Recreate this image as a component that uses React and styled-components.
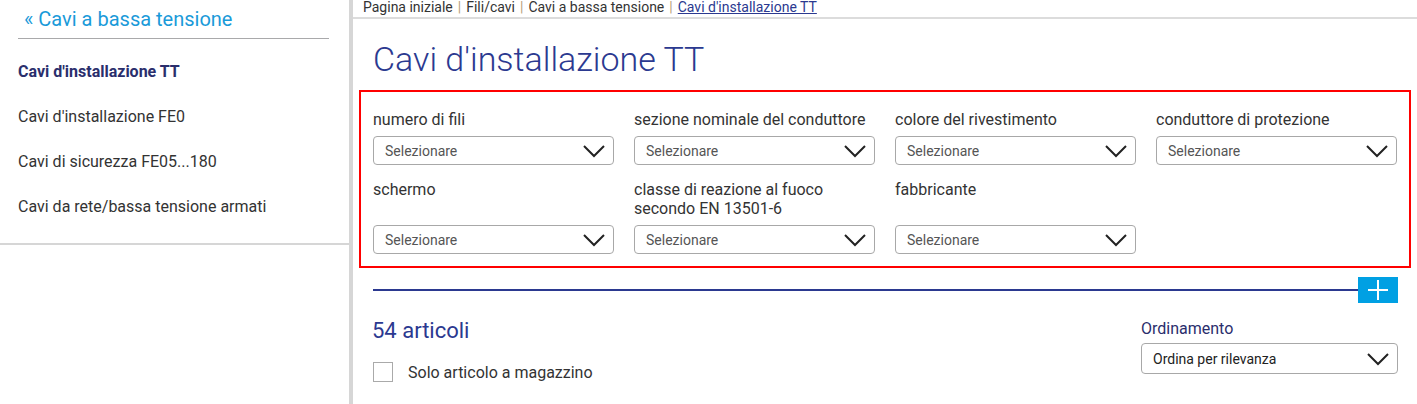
import React from "react";
import styled, { createGlobalStyle } from "styled-components";

const GlobalStyle = createGlobalStyle`
    body {
        margin: 0;
        background: #fff;
        font-family: Roboto, "Liberation Sans", Arial, sans-serif;
        color: #333;
    }
`

const Page = styled.div`
    display: flex;
    width: 1417px;
    height: 404px;
    overflow: hidden;
`

const Sidebar = styled.aside`
    width: 349px;
    flex-shrink: 0;
    border-right: 4px solid #d6d6d6;
`

const SideHead = styled.a`
    display: block;
    margin: 0 20px 0 18px;
    padding: 8px 0 7px 6px;
    border-bottom: 1px solid #a9a9ab;
    color: #1a9ad9;
    font-size: 20px;
    line-height: 23px;
    text-decoration: none;
`

const SideList = styled.ul`
    list-style: none;
    margin: 0;
    padding: 21px 0 26px 18px;
    border-bottom: 2px solid #d6d6d6;
`

const SideItem = styled.li`
    height: 45px;
    line-height: 23px;
    font-size: 16px;
    font-weight: ${p => (p.$active ? 700 : 400)};
    color: ${p => (p.$active ? "#2a2e6c" : "#333")};
    &:last-child { height: 22px; }
`

const Main = styled.main`
    flex: 1;
    min-width: 0;
`

const Crumbs = styled.nav`
    height: 17px;
    padding-left: 10px;
    border-bottom: 2px solid #dcdcdc;
    font-size: 14px;
    line-height: 15px;
    color: #333;

    span.sep { color: #b8a078; margin: 0 5px; }
    a { color: #2b3990; text-decoration: underline; }
`

const Title = styled.h1`
    margin: 0;
    padding: 21px 0 0 20px;
    height: 50px;
    font-size: 34px;
    line-height: 38px;
    font-weight: 300;
    color: #2b3990;
`

const FilterBox = styled.section`
    margin: 0 6px 0 6px;
    height: 178px;
    box-sizing: border-box;
    border: 2px solid #ff0000;
    padding: 18px 11px 0 12px;
    display: grid;
    grid-template-columns: repeat(4, 241px);
    column-gap: 20px;
    row-gap: 15px;
    align-content: start;
`

const Filter = styled.div`
    display: flex;
    flex-direction: column;
    justify-content: space-between;
`

const Label = styled.label`
    display: block;
    font-size: 16px;
    line-height: 19px;
    color: ${p => (p.$accent ? "#2a2e6c" : "#333")};
    margin-bottom: 7px;
    min-height: ${p => (p.$tall ? "38px" : "auto")};
`

const Select = styled.div`
    display: flex;
    align-items: center;
    justify-content: space-between;
    height: 29px;
    box-sizing: border-box;
    border: 1px solid #a8a8a8;
    border-radius: 4px;
    padding: 0 7px 0 11px;
    font-size: 14px;
    color: ${p => (p.$dark ? "#222" : "#555")};
    background: #fff;
`

const Chevron = () => (
    <svg width="24" height="14" viewBox="0 0 24 14">
        <path d="M2 2 L12 12 L22 2" fill="none" stroke="#222" strokeWidth="2" />
    </svg>
)

const Divider = styled.div`
    display: flex;
    align-items: center;
    margin: 9px 19px 0 20px;
    height: 26px;

    &::before {
        content: "";
        flex: 1;
        height: 2px;
        background: #2b3990;
    }
`

const PlusButton = styled.button`
    width: 40px;
    height: 26px;
    border: 0;
    padding: 0;
    background: #00a0e3;
    display: flex;
    align-items: center;
    justify-content: center;
    cursor: pointer;
`

const Results = styled.div`
    display: flex;
    justify-content: space-between;
    align-items: flex-start;
    padding: 13px 19px 0 19px;
`

const Count = styled.h2`
    margin: 0;
    font-size: 22px;
    line-height: 30px;
    font-weight: 400;
    color: #2b3990;
`

const CheckRow = styled.label`
    display: flex;
    align-items: center;
    gap: 15px;
    margin-top: 16px;
    margin-left: 1px;
    font-size: 16px;
    color: #333;
`

const Box = styled.span`
    width: 20px;
    height: 20px;
    box-sizing: border-box;
    border: 1px solid #aaa;
    background: #fff;
`

const Sorting = styled.div`
    width: 257px;
    padding-top: 3px;

    label { margin-bottom: 5px; }
    ${Select} { height: 31px; }
`

const filters = [
    { label: "numero di fili" },
    { label: "sezione nominale del conduttore" },
    { label: "colore del rivestimento" },
    { label: "conduttore di protezione" },
    { label: "schermo" },
    { label: "classe di reazione al fuoco secondo EN 13501-6" },
    { label: "fabbricante" },
]

const sideItems = [
    "Cavi d'installazione TT",
    "Cavi d'installazione FE0",
    "Cavi di sicurezza FE05...180",
    "Cavi da rete/bassa tensione armati",
]

export default function App() {
    return (
        <Page>
            <GlobalStyle />
            <Sidebar>
                <SideHead href="#">« Cavi a bassa tensione</SideHead>
                <SideList>
                    {sideItems.map((item, i) => (
                        <SideItem key={item} $active={i === 0}>{item}</SideItem>
                    ))}
                </SideList>
            </Sidebar>
            <Main>
                <Crumbs>
                    Pagina iniziale<span className="sep">|</span>Fili/cavi<span className="sep">|</span>Cavi a bassa tensione<span className="sep">|</span><a href="#">Cavi d'installazione TT</a>
                </Crumbs>
                <Title>Cavi d'installazione TT</Title>
                <FilterBox>
                    {filters.map((f, i) => (
                        <Filter key={f.label}>
                            <Label $tall={i >= 4}>{f.label}</Label>
                            <Select>
                                Selezionare
                                <Chevron />
                            </Select>
                        </Filter>
                    ))}
                </FilterBox>
                <Divider>
                    <PlusButton aria-label="Altri filtri">
                        <svg width="22" height="22" viewBox="0 0 22 22">
                            <path d="M11 1 V21 M1 11 H21" stroke="#fff" strokeWidth="2" />
                        </svg>
                    </PlusButton>
                </Divider>
                <Results>
                    <div>
                        <Count>54 articoli</Count>
                        <CheckRow>
                            <Box />
                            Solo articolo a magazzino
                        </CheckRow>
                    </div>
                    <Sorting>
                        <Label $accent>Ordinamento</Label>
                        <Select $dark>
                            Ordina per rilevanza
                            <Chevron />
                        </Select>
                    </Sorting>
                </Results>
            </Main>
        </Page>
    )
}
